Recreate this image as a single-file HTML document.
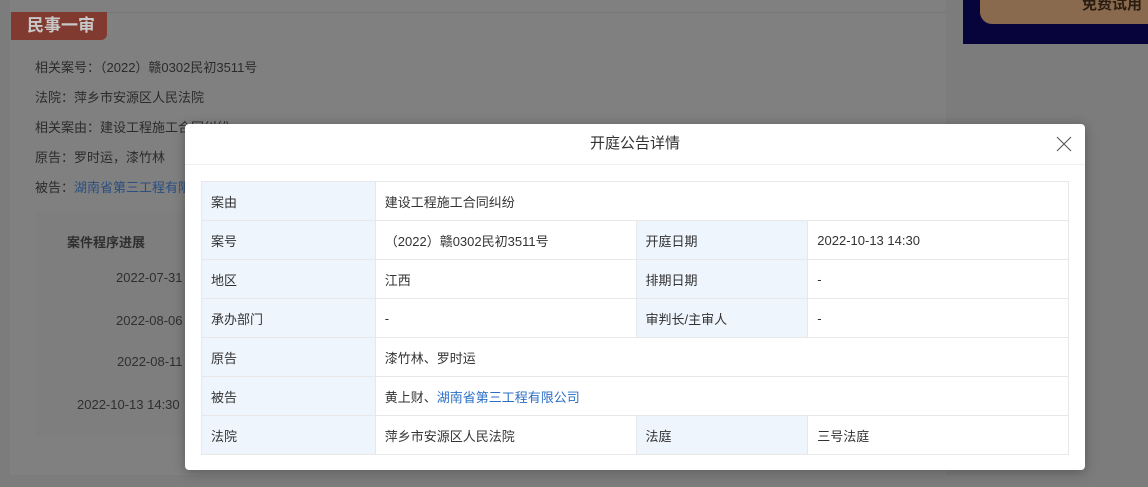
<!DOCTYPE html>
<html><head><meta charset="utf-8"><style>
body{margin:0;width:1148px;height:487px;overflow:hidden;background:#7c7c7c;font-family:"Liberation Sans","Noto Sans CJK SC",sans-serif;position:relative}
.card{position:absolute;left:10px;top:-5px;width:936px;height:480px;background:#808080}
.hdr{position:absolute;left:10px;top:12px;width:936px;height:1px;background:#767676}
.tag{position:absolute;left:11px;top:12px;width:96px;height:28px;background:#803a30;border-radius:0 0 6px 0;color:#c8c8c8;font-size:17px;font-weight:bold;line-height:28px;padding-left:16px;box-sizing:border-box}
.info{position:absolute;left:35px;font-size:13px;color:#2b2b2b}
.ad{position:absolute;left:963px;top:0;width:185px;height:44px;background:#06043a}
.ad div{position:absolute;left:17px;top:-10px;width:170px;height:34px;background:#8a6a4e;border-radius:0 0 0 12px;color:#2a1c10;font-size:15px;font-weight:bold;text-align:right;padding-right:8px;box-sizing:border-box;line-height:30px}
.prog{position:absolute;left:36px;top:212px;width:150px;height:225px;background:#7e7e7e}
.d{position:absolute;font-size:13px;color:#2f2f2f}
.modal{position:absolute;left:185px;top:124px;width:900px;height:346px;background:#fff;border-radius:4px;box-shadow:0 2px 12px rgba(0,0,0,.3)}
.mt{height:40px;border-bottom:1px solid #f0f0f0;text-align:center;line-height:40px;font-size:15px;color:#333}
.x{position:absolute;right:13px;top:12px}
table{position:absolute;left:16px;top:57px;width:868px;border-collapse:collapse;font-size:13px;color:#333}
td{border:1px solid #e8e8e8;height:39px;padding:0 0 0 9px;box-sizing:border-box}
td.l{background:#eef5fd}
a{color:#2b6fc5;text-decoration:none}
</style></head><body>
<div class="card"></div><div class="hdr"></div>
<div class="tag">民事一审</div>
<div class="info" style="top:57px">相关案号：（2022）赣0302民初3511号</div>
<div class="info" style="top:87px">法院：萍乡市安源区人民法院</div>
<div class="info" style="top:117px">相关案由：建设工程施工合同纠纷</div>
<div class="info" style="top:147px">原告：罗时运，漆竹林</div>
<div class="info" style="top:177px">被告：<span style="color:#2a4e80">湖南省第三工程有限公司</span></div>
<div class="prog"></div>
<div class="d" style="left:67px;top:232px;font-weight:bold;font-size:13px">案件程序进展</div>
<div class="d" style="left:116px;top:270px">2022-07-31</div>
<div class="d" style="left:116px;top:313px">2022-08-06</div>
<div class="d" style="left:117px;top:354px">2022-08-11</div>
<div class="d" style="left:77px;top:397px">2022-10-13 14:30</div>
<div class="ad"><div>免费试用</div></div>
<div class="modal">
<div class="mt">开庭公告详情</div>
<svg class="x" width="16" height="16" viewBox="0 0 16 16"><path d="M1 1L15 15M15 1L1 15" stroke="#555" stroke-width="1.1"/></svg>
<table>
<colgroup><col style="width:174px"><col style="width:261px"><col style="width:172px"><col style="width:261px"></colgroup>
<tr><td class="l">案由</td><td colspan="3">建设工程施工合同纠纷</td></tr>
<tr><td class="l">案号</td><td>（2022）赣0302民初3511号</td><td class="l">开庭日期</td><td>2022-10-13 14:30</td></tr>
<tr><td class="l">地区</td><td>江西</td><td class="l">排期日期</td><td>-</td></tr>
<tr><td class="l">承办部门</td><td>-</td><td class="l">审判长/主审人</td><td>-</td></tr>
<tr><td class="l">原告</td><td colspan="3">漆竹林、罗时运</td></tr>
<tr><td class="l">被告</td><td colspan="3">黄上财、<a>湖南省第三工程有限公司</a></td></tr>
<tr><td class="l">法院</td><td>萍乡市安源区人民法院</td><td class="l">法庭</td><td>三号法庭</td></tr>
</table>
</div>
</body></html>
